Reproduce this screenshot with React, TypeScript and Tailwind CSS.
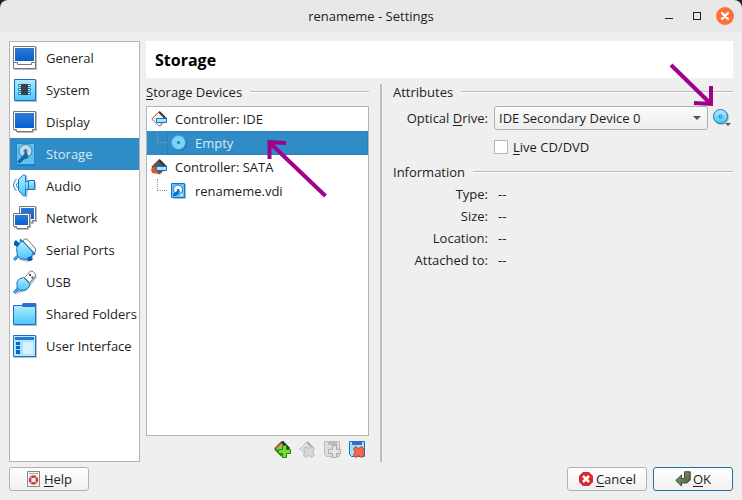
import { useState } from "react";
import type { ReactNode } from "react";

const shadow = "#b9bdc0";

function Svg({ size = 24, children }: { size?: number; children: ReactNode }) {
  const cls = size === 24 ? "h-6 w-6" : size === 20 ? "h-5 w-5" : "h-4 w-4";
  return (
    <svg viewBox={`0 0 ${size} ${size}`} className={`${cls} shrink-0 overflow-visible`} fill="none" aria-hidden="true">
      {children}
    </svg>
  );
}

function Gradients() {
  return (
    <svg className="absolute h-0 w-0" aria-hidden="true">
      <defs>
        <linearGradient id="cyan" x1="0" y1="0" x2="0" y2="1">
          <stop offset="0" stopColor="#b5ecfd" />
          <stop offset="1" stopColor="#45c8fb" />
        </linearGradient>
        <linearGradient id="blue" x1="0" y1="0" x2="0" y2="1">
          <stop offset="0" stopColor="#2f7ad6" />
          <stop offset="1" stopColor="#0560d0" />
        </linearGradient>
        <linearGradient id="olive" x1="0" y1="0" x2="1" y2="1">
          <stop offset="0" stopColor="#8fa07c" />
          <stop offset="1" stopColor="#46583a" />
        </linearGradient>
      </defs>
    </svg>
  );
}

function GeneralIcon() {
  return (
    <Svg>
      <path d="M1 1h23v23H1z" fill={shadow} />
      <path d="M.5.5h22v22H.5z" fill="#fff" stroke="#777" />
      <path d="M2 2h19v13H2z" fill="url(#blue)" />
      <path d="M1 16.5h3.5v2h14v-2H22" stroke="#777" />
    </Svg>
  );
}

function SystemIcon() {
  return (
    <Svg>
      <path d="M2 2h22v22H2z" fill={shadow} />
      <path d="M1.5 1.5h21v21h-21z" fill="url(#cyan)" stroke="#1b72c4" />
      <path d="M5.5 6.5h3v2h-3zM5.5 10.5h3v2h-3zM5.5 14.5h3v2h-3zM14.5 6.500h3v2h-3zM14.500 10.5h3v2h-3zM14.500 14.5h3v2h-3z" fill="#fff" stroke="#2378c2" />
      <path d="M8 6h7v11H8z" fill="#38404a" />
    </Svg>
  );
}

function DisplayIcon() {
  return (
    <Svg>
      <path d="M1 2h23v19h-3v2H4v-2H1z" fill={shadow} />
      <path d="M.5 1.5h22v18h-3v2h-16v-2h-3z" fill="#fff" stroke="#777" />
      <path d="M2 3h19v15H2z" fill="url(#blue)" />
    </Svg>
  );
}

function StorageIcon() {
  return (
    <Svg>
      <path d="M4 2h18v22H4z" fill="#2879ad" />
      <path d="M3.5 1.5h18v21h-18z" fill="#61bfec" stroke="#2085cf" />
      <circle cx="12.500" cy="9" r="6.500" fill="#c0d9e8" stroke="#307fae" />
      <circle cx="12.500" cy="9" r="2" fill="#2882ba" />
      <path d="M13 10l2 4q0 3-4 3l-4 4q-3 0-2-2l5-5z" fill="#1c68a2" stroke="#1c68a2" />
    </Svg>
  );
}

function AudioIcon() {
  return (
    <Svg>
      <path d="M8 3l6-2 1 7h8v8h-8l-1 8-7-6z" fill={shadow} />
      <path d="M5.500 5.500L10.500.8q2 0 2 2V21q-.5 1.500-2 1L5.500 16.500z" fill="url(#cyan)" stroke="#1b72c4" />
      <path d="M12.500 7.500h3v8h-3M15.500 6.500h6v9h-6z" fill="url(#cyan)" stroke="#1b72c4" />
      <path d="M3.500 5Q-2.500 11 3.500 17M5 8.500Q1.500 11 5 14" stroke="#1683d9" />
    </Svg>
  );
}

function NetworkIcon() {
  return (
    <Svg>
      <path d="M7 1h17v15h-3v2H7z" fill={shadow} />
      <path d="M6.500.5h16v14h-3v2h-13z" fill="#fff" stroke="#777" />
      <path d="M8 2h13v11H8z" fill="url(#blue)" />
      <path d="M1 8h17v14h-2v2H4v-2H1z" fill={shadow} />
      <path d="M.5 7.500h16v13h-2v2h-11v-2h-3z" fill="#fff" stroke="#777" />
      <path d="M2 9h13v10H2z" fill="url(#blue)" />
    </Svg>
  );
}

function SerialIcon() {
  return (
    <Svg>
      <path d="M12 3l11 10-3 6-5 5-9-2-1-8z" fill={shadow} />
      <path d="M10 3q1-3 4-2l8 9q1.500 2 0 4l-2 2z" fill="#fff" stroke="#777" />
      <path d="M7 1.500L22 16.500" stroke="#176fca" strokeWidth="2" />
      <path d="M6 4.500l4-1 10 11-1.500 4-5 3-6-1-3-3-1-7z" fill="url(#cyan)" stroke="#1b72c4" />
      <path d="M1 22l4-4" stroke="#1b72c4" strokeWidth="3" />
      <path d="M1 22l4-4" stroke="#6fd1f8" />
      <path d="M1 4l2-2 4 4-3 3-3-2zM14 20l4-2 2 3-2 2h-3z" fill="#075fc0" />
    </Svg>
  );
}

function UsbIcon() {
  return (
    <Svg>
      <path d="M15 8l5-6 4 5-6 8-5 6-10 3z" fill={shadow} />
      <path d="M11.500 7.500l5.500-6q1.500-1 3 0l2 2q1 1.500 0 3l-5.500 6z" fill="#fff" stroke="#777" />
      <path d="M16 4h2v2h-2zM18.500 6.500h2v2h-2z" fill="#555" />
      <path d="M10.500 7.500l6 6q0 5-4.500 6.500l-5 .5-3-3V12q1.500-4 6.500-4.500z" fill="url(#cyan)" stroke="#1b72c4" />
      <path d="M1 23l4.500-4.500" stroke="#1b72c4" strokeWidth="3" />
      <path d="M1 23l4.500-4.500" stroke="#6fd1f8" />
    </Svg>
  );
}

function FolderIcon() {
  return (
    <Svg>
      <path d="M1 5h8l2-3h13v22H1z" fill={shadow} />
      <path d="M8 4l2-3h13v6H8z" fill="#2c70cf" />
      <path d="M.5 3.500h8l1.500 1h12.500v18H.5z" fill="url(#cyan)" stroke="#1b72c4" />
    </Svg>
  );
}

function InterfaceIcon() {
  return (
    <Svg>
      <path d="M1 2h23v22H1z" fill={shadow} />
      <path d="M.5 1.500h22v21H.5z" fill="#baeafd" stroke="#1b72c4" />
      <path d="M2 3h19v3H2z" fill="#2876d3" />
      <path d="M2 7h19v14H2z" fill="#a5e4fb" />
      <path d="M3 8h4v3H3zM3 12h4v3H3zM3 16h4v4H3z" fill="#0862ca" />
      <path d="M10 8h10v12H10z" fill="#d6f3fc" />
    </Svg>
  );
}

function ControllerIcon({ sata = false }: { sata?: boolean }) {
  return (
    <Svg size={16}>
      <path d="M1 9l7-7 8 7-7 7z" fill={shadow} />
      <path d="M.8 8L8 .8 15.200 8 8 15.200z" fill={sata ? "#555" : "#f2f2f2"} stroke={sata ? "#555" : "#888"} />
      <path d="M8 .8L15.200 8" stroke="#333" strokeWidth={2} />
      <path d="M.8 8L8 .8" stroke={sata ? "#555" : "#c86a48"} />
      {sata && <path d="M0 10l4-3 4 8-7-1z" fill="#e5522a" />}
      <path d="M5.500 7.500h10v4h-10z" fill="#a3e5fc" stroke="#176fc5" />
    </Svg>
  );
}

function DiscIcon() {
  return (
    <Svg size={16}>
      <circle cx="8.500" cy="8.500" r="7.500" fill="#2576aa" />
      <circle cx="7.500" cy="7.500" r="7" fill="#80d2f5" stroke="#3ba2df" />
      <circle cx="7.500" cy="7.500" r="1.500" fill="#1d79b8" />
    </Svg>
  );
}

function DiskIcon() {
  return (
    <Svg size={16}>
      <path d="M2 1h13v15H2z" fill={shadow} />
      <path d="M.5.5h13v14H.5z" fill="#5cc9f8" stroke="#1675cf" />
      <circle cx="7" cy="6.500" r="4.500" fill="#fff" stroke="#2575c2" />
      <path d="M6 6h2l1 3-4 4H2v-2l4-3z" fill="#176cc4" />
      <path d="M9 12h3" stroke="#fff" />
    </Svg>
  );
}

const plusPath = "M8.500 4.500h4v4h4v4h-4v4h-4v-4h-4v-4h4z";
const crossPath = "M6.500 5.500l3 2 3-2 3 3-2 2.500 2 3-3 2.500-3-2-3 2-2-2.500 2-3-2-2.500z";

function AddControllerIcon() {
  return (
    <Svg size={16}>
      <path d="M0 8l8-8 8 8-7 7z" fill="#8cc46c" />
      <path d="M.8 8L8 .8" stroke="#bf5537" strokeWidth="2" />
      <path d="M8 .8L15 8" stroke="#333" strokeWidth="3" />
      <path d="M1 8l7 7" stroke="#2e8c12" strokeWidth="2" />
      <path d={plusPath} fill="#72dd2f" stroke="#278704" />
    </Svg>
  );
}

function RemoveControllerIcon() {
  return (
    <Svg size={16}>
      <path d="M.8 8L8 .8 15.200 8 8 15.200z" fill="#e2e2e2" stroke="#bdbdbd" />
      <path d="M8 1l6 6" stroke="#aaa" strokeWidth="2" />
      <path d={crossPath} fill="#d6d6d6" stroke="#b8b8b8" />
    </Svg>
  );
}

function AddAttachmentIcon() {
  return (
    <Svg size={16}>
      <path d="M.5.5h15v15H2.500l-2-2z" fill="#ddd" stroke="#bbb" />
      <path d="M4 1h9v3H4z" fill="#bbb" />
      <path d={plusPath} fill="#e4e4e4" stroke="#aaa" />
    </Svg>
  );
}

function RemoveAttachmentIcon() {
  return (
    <Svg size={16}>
      <path d="M.5.5h15v15H2.500l-2-2z" fill="#9de2fb" stroke="#1b72c4" />
      <path d="M3 1h10v3H3z" fill="#2b74ca" />
      <path d={crossPath} fill="#f36b49" stroke="#d13a1e" />
    </Svg>
  );
}

function ChooseDiscIcon() {
  return (
    <Svg size={20}>
      <circle cx="8.500" cy="9.500" r="7.500" fill={shadow} />
      <circle cx="7.500" cy="8.500" r="7" fill="url(#cyan)" stroke="#1b72c4" />
      <circle cx="7.500" cy="8.500" r="1.500" fill="#7ac8ef" stroke="#1b72c4" />
      <path d="M12 15h6l-3 3z" fill="#555" />
    </Svg>
  );
}

function HelpIcon() {
  return (
    <Svg size={16}>
      <path d="M1.500.5h12v15h-12z" fill="#f3f3f1" stroke="#888" />
      <path d="M3 2.500h9" stroke="#aaa" />
      <circle cx="7.500" cy="9" r="3.500" stroke="#d23b3e" strokeWidth="2.500" />
      <path d="M4.500 6l2 2M10.500 6l-2 2M4.500 12l2-2M10.500 12l-2-2" stroke="#f6d9d9" />
    </Svg>
  );
}

function CancelIcon() {
  return (
    <Svg size={16}>
      <path d="M5 1h6l4 4v6l-4 4H5l-4-4V5z" fill="#d9292f" />
      <path d="M5 5l6 6M11 5l-6 6" stroke="#fff" strokeWidth="2.500" />
    </Svg>
  );
}

function OkIcon() {
  return (
    <Svg size={16}>
      <path d="M9.500.8h5.700V9l-3 3H6.500v3L.8 9.500 6.500 4v3.500h3z" fill="url(#olive)" stroke="#3d4b34" />
    </Svg>
  );
}

function Key({ letter, rest }: { letter: string; rest: string }) {
  return (
    <span>
      <span className="underline underline-offset-2">{letter}</span>
      {rest}
    </span>
  );
}

function GroupTitle({ children }: { children: ReactNode }) {
  return (
    <h2 className="flex h-[22px] items-center gap-2 whitespace-nowrap">
      {children}
      <span className="h-0.5 flex-1 border-t border-[#b8b8b8] bg-white" />
    </h2>
  );
}

const pages = [
  { name: "General", Icon: GeneralIcon },
  { name: "System", Icon: SystemIcon },
  { name: "Display", Icon: DisplayIcon },
  { name: "Storage", Icon: StorageIcon },
  { name: "Audio", Icon: AudioIcon },
  { name: "Network", Icon: NetworkIcon },
  { name: "Serial Ports", Icon: SerialIcon },
  { name: "USB", Icon: UsbIcon },
  { name: "Shared Folders", Icon: FolderIcon },
  { name: "User Interface", Icon: InterfaceIcon },
];

const info = ["Type:", "Size:", "Location:", "Attached to:"];

function Branch() {
  return <span className="mb-3 h-3 w-2.5 shrink-0 border-b border-l border-dotted border-[#999]" />;
}

function TitleBar() {
  return (
    <header className="grid h-8 shrink-0 grid-cols-[1fr_auto_1fr] items-center rounded-t-lg bg-[#e8e8e8] px-2">
      <h1 className="col-start-2">renameme - Settings</h1>
      <div className="flex items-center justify-end">
        <button aria-label="Minimize" className="flex h-6 w-7 items-end justify-center pb-[9px]">
          <span className="h-px w-2 bg-[#222]" />
        </button>
        <button aria-label="Maximize" className="flex h-6 w-7 items-center justify-center">
          <span className="h-2 w-2 border border-[#222]" />
        </button>
        <button aria-label="Close" className="ml-[5px] flex h-[18px] w-[18px] items-center justify-center rounded-full bg-[#ff7139]">
          <svg viewBox="0 0 8 8" className="h-2 w-2" aria-hidden="true">
            <path d="M1 1l6 6M7 1L1 7" stroke="#fff" strokeWidth="2.400" strokeLinecap="round" />
          </svg>
        </button>
      </div>
    </header>
  );
}

const buttonClass =
  "flex h-6 w-20 items-center justify-center gap-0.5 rounded-[3px] border bg-linear-to-b from-white to-[#f0f0f0]";

export default function App() {
  const [live, setLive] = useState(false);
  return (
    <div className="relative flex min-h-screen flex-col bg-[#202020] font-['Open_Sans','Noto_Sans',sans-serif] text-[13px] leading-5 text-[#1d1d1d]">
      <Gradients />
      <TitleBar />
      <div className="flex flex-1 flex-col gap-[5px] bg-[#efefef] px-[9px] pt-[9px] pb-[9px]">
        <div className="flex flex-1 gap-1.5">
          <nav aria-label="Settings pages" className="w-[131px] shrink-0 border border-[#b4b4b4] bg-white">
            {pages.map(({ name, Icon }) => (
              <button
                key={name}
                aria-current={name === "Storage" ? "page" : undefined}
                className={`flex h-8 w-full items-center gap-[9px] pl-[3px] whitespace-nowrap ${
                  name === "Storage" ? "bg-[#308cc6] text-[#d9eaf5]" : ""
                }`}
              >
                <Icon />
                {name}
              </button>
            ))}
          </nav>
          <main className="flex min-w-0 flex-1 flex-col">
            <div className="flex h-[37px] items-center bg-white px-[9px] text-base font-bold text-black">Storage</div>
            <div className="flex flex-1 pt-[3px]">
              <section className="flex w-[234px] shrink-0 flex-col pr-[11px]">
                <GroupTitle>
                  <Key letter="S" rest="torage Devices" />
                </GroupTitle>
                <ul role="tree" aria-label="Storage Devices" className="mt-[3px] flex-1 border border-[#b4b4b4] bg-white">
                  <li role="treeitem" className="flex h-6 items-center gap-2 pl-1">
                    <ControllerIcon />
                    Controller: IDE
                  </li>
                  <li role="treeitem" aria-selected="true" className="flex h-6 items-center bg-[#308cc6] pl-2.5 text-[#d9eaf5]">
                    <Branch />
                    <span className="flex h-6 flex-1 items-center gap-2 border border-[#2a80b8] pl-[3px]">
                      <DiscIcon />
                      Empty
                    </span>
                  </li>
                  <li role="treeitem" className="flex h-6 items-center gap-2 pl-1">
                    <ControllerIcon sata />
                    Controller: SATA
                  </li>
                  <li role="treeitem" className="flex h-6 items-center pl-2.5">
                    <Branch />
                    <span className="flex items-center gap-2 pl-1">
                      <DiskIcon />
                      renameme.vdi
                    </span>
                  </li>
                </ul>
                <div className="flex h-[26px] items-center justify-end gap-[9px] pr-1">
                  <button aria-label="Add controller"><AddControllerIcon /></button>
                  <button aria-label="Remove controller" disabled><RemoveControllerIcon /></button>
                  <button aria-label="Add attachment" disabled><AddAttachmentIcon /></button>
                  <button aria-label="Remove attachment"><RemoveAttachmentIcon /></button>
                </div>
              </section>
              <div className="mt-[3px] w-0.5 bg-[#bdbdbd]" />
              <section className="min-w-0 flex-1 pl-[11px]">
                <GroupTitle>Attributes</GroupTitle>
                <div className="mt-[3px] mb-0.5 grid grid-cols-[95px_1fr] gap-x-1.5">
                  <label htmlFor="drive" className="flex h-6 items-center justify-end whitespace-nowrap">
                    <span>
                      Optical <span className="underline underline-offset-2">D</span>rive:
                    </span>
                  </label>
                  <div className="flex items-center gap-[5px]">
                    <div className="relative flex-1">
                      <select
                        id="drive"
                        className="h-6 w-full appearance-none rounded-[3px] border border-[#b0b0b0] bg-linear-to-b from-[#fcfcfc] to-[#ededed] pr-5 pl-1 leading-5"
                      >
                        <option>IDE Secondary Device 0</option>
                      </select>
                      <svg viewBox="0 0 8 4" className="pointer-events-none absolute top-2.5 right-[7px] h-1 w-2" aria-hidden="true">
                        <path d="M0 0h8L4 4z" fill="#555" />
                      </svg>
                    </div>
                    <button aria-label="Choose disc"><ChooseDiscIcon /></button>
                  </div>
                  <label className="col-start-2 mt-[5px] flex h-6 items-center gap-[5px]">
                    <input
                      type="checkbox"
                      checked={live}
                      onChange={(event) => setLive(event.target.checked)}
                      className="h-3.5 w-3.5 appearance-none border border-[#b8b8b8] bg-white checked:bg-[#308cc6]"
                    />
                    <Key letter="L" rest="ive CD/DVD" />
                  </label>
                </div>
                <GroupTitle>Information</GroupTitle>
                <dl className="grid grid-cols-[95px_1fr] gap-x-2.5 leading-[22px]">
                  {info.map((label) => (
                    <div key={label} className="contents">
                      <dt className="text-right whitespace-nowrap">{label}</dt>
                      <dd>--</dd>
                    </div>
                  ))}
                </dl>
              </section>
            </div>
          </main>
        </div>
        <footer className="flex gap-1.5">
          <button className={`${buttonClass} mr-auto border-[#b0b0b0]`}>
            <HelpIcon />
            <Key letter="H" rest="elp" />
          </button>
          <button className={`${buttonClass} border-[#b0b0b0]`}>
            <CancelIcon />
            <Key letter="C" rest="ancel" />
          </button>
          <button className={`${buttonClass} border-[#236fa0] to-[#dfe5ea]`}>
            <OkIcon />
            <Key letter="O" rest="K" />
          </button>
        </footer>
      </div>
      <svg className="pointer-events-none absolute top-[139px] left-[266px] h-[60px] w-[62px]" viewBox="0 0 62 60" fill="none" stroke="#a0008c" strokeWidth="4" aria-hidden="true">
        <path d="M59.500 57L4 4M3.500 20V3L20 4" />
      </svg>
      <svg className="pointer-events-none absolute top-[62px] right-[26px] h-[46px] w-[48px]" viewBox="0 0 48 46" fill="none" stroke="#a0008c" strokeWidth="4" aria-hidden="true">
        <path d="M3 3l40 39M43 24v18l-17-1" />
      </svg>
    </div>
  );
}
